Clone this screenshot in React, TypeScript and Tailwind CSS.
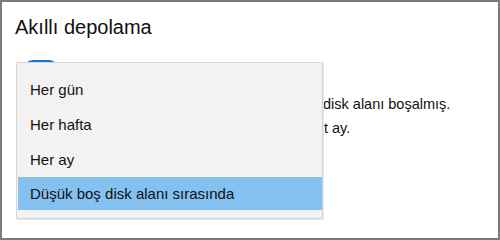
import React from "react";

const items = ["Her gün", "Her hafta", "Her ay"];

export default function App() {
  return (
    <div
      className="w-[500px] h-[240px] bg-white border-2 border-[#7a7a7a] relative overflow-hidden text-black"
      style={{ fontFamily: '"Liberation Sans", Arial, sans-serif' }}
    >
      <div className="pl-[13px] pt-[13px]">
        <h1 className="text-[20px] leading-[24px] text-[#111]">Akıllı depolama</h1>
        <div className="mt-[21px] pl-[8px] h-[20px]">
          <div className="w-[36px] h-[20px] rounded-full bg-[#1a73cf]" />
        </div>
        <div className="mt-[12px] pl-[307px] text-[14.5px] leading-[24px] text-[#111] whitespace-nowrap">
          <div className="pl-[1px]">disk alanı boşalmış.</div>
          <div className="pl-[2px]">t ay.</div>
        </div>
      </div>

      <div className="absolute left-[14px] top-[60px] w-[307px] h-[157px] bg-[#f2f2f2] border border-[#d6d6d6] shadow-[1px_1px_0_0_#e6e6e6] pt-[9px] pb-[8px] pl-[1px] text-[15px] text-[#111]">
        {items.map((t) => (
          <div key={t} className="h-[35px] flex items-center pl-[12px] pt-[1px]">
            {t}
          </div>
        ))}
        <div className="h-[33px] flex items-center pl-[12px] pt-[1px] bg-[#84c0f0]">
          Düşük boş disk alanı sırasında
        </div>
      </div>
    </div>
  );
}
